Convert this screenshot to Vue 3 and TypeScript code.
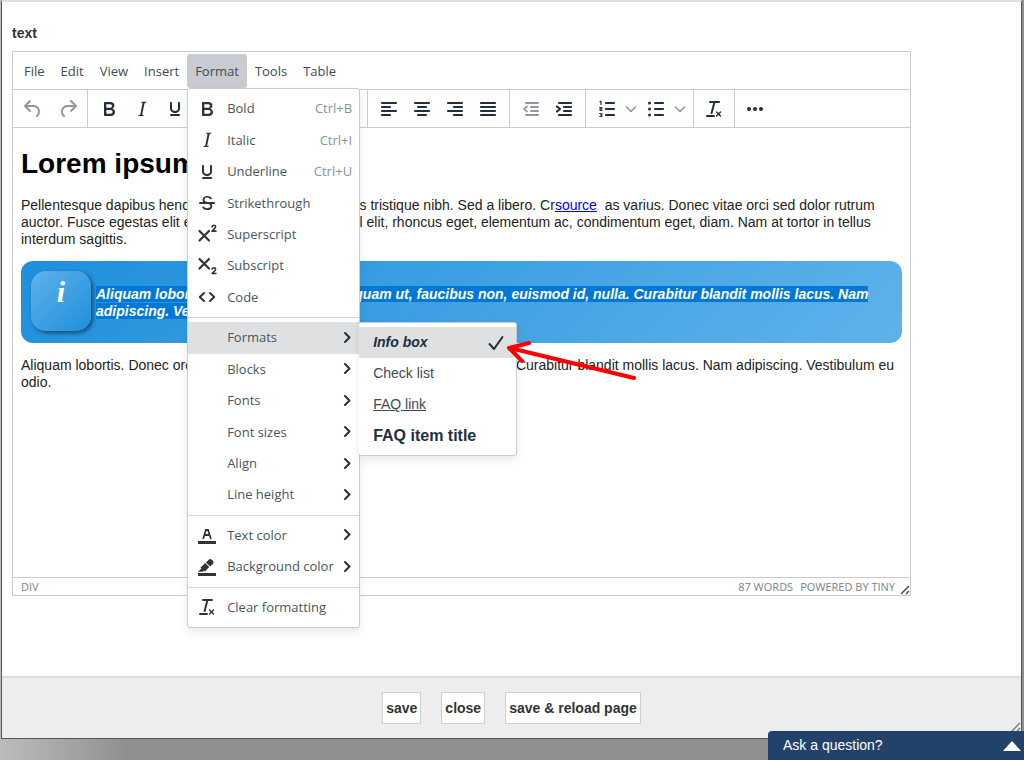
<script lang="ts">
import { h } from 'vue'
</script>

<script setup lang="ts">
interface IconShape {
  d: string
  stroke?: number
}

interface MenuEntry {
  label: string
  icon?: string
  shortcut?: string
  submenu?: boolean
}

const icons: Record<string, IconShape[]> = {
  undo: [{ d: 'M6.4 8H12c3.7 0 6.2 2 6.8 5.1.6 2.7-.4 5.6-2.3 6.8a1 1 0 0 1-1-1.8c1.1-.6 1.8-2.7 1.4-4.6-.5-2.1-2.1-3.5-4.9-3.5H6.4l3.3 3.3a1 1 0 1 1-1.4 1.4l-5-5a1 1 0 0 1 0-1.4l5-5a1 1 0 0 1 1.4 1.4L6.4 8z' }],
  redo: [{ d: 'M17.6 10H12c-2.8 0-4.4 1.4-4.9 3.5-.4 2 .3 4 1.4 4.6a1 1 0 1 1-1 1.8c-2-1.2-2.9-4.1-2.3-6.8.6-3 3-5.1 6.8-5.1h5.6l-3.3-3.3a1 1 0 1 1 1.4-1.4l5 5a1 1 0 0 1 0 1.4l-5 5a1 1 0 0 1-1.4-1.4l3.3-3.3z' }],
  bold: [{ d: 'M7.8 19c-.3 0-.5 0-.6-.2l-.2-.5V5.7c0-.2 0-.4.2-.5l.6-.2h5c1.5 0 2.7.3 3.5 1 .7.6 1.1 1.4 1.1 2.5a3 3 0 0 1-.6 1.9c-.4.6-1 1-1.6 1.2.4.1.9.3 1.3.6s.8.7 1 1.2c.4.4.5 1 .5 1.6 0 1.3-.4 2.3-1.3 3-.8.7-2.1 1-3.8 1H7.8zm5-8.3c.6 0 1.2-.1 1.6-.5.4-.3.6-.7.6-1.3 0-1.1-.8-1.7-2.3-1.7H9.3v3.5h3.4zm.5 6c.7 0 1.3-.1 1.7-.4.4-.4.6-.9.6-1.5s-.2-1-.7-1.4c-.4-.3-1-.4-2-.4H9.4v3.8h4z' }],
  italic: [{ d: 'M16.7 4.7l-.1.9h-.3c-.6 0-1 0-1.4.3-.3.3-.4.6-.5 1.1l-2.1 9.8v.6c0 .5.4.8 1.4.8h.2l-.2.8H8l.2-.8h.2c1.1 0 1.8-.5 2-1.5l2-9.8.1-.5c0-.6-.4-.8-1.4-.8h-.3l.2-.9h5.8z' }],
  underline: [{ d: 'M16 5c.6 0 1 .4 1 1v5.5a4 4 0 0 1-.4 1.8l-1 1.4a5.3 5.3 0 0 1-5.5 1 5 5 0 0 1-1.6-1c-.5-.4-.8-.9-1.1-1.4a4 4 0 0 1-.4-1.8V6c0-.6.4-1 1-1s1 .4 1 1v5.5c0 .3 0 .6.2 1l.6.7a3.3 3.3 0 0 0 2.2.8 3.4 3.4 0 0 0 2.2-.8c.3-.2.4-.5.6-.8l.2-.9V6c0-.6.4-1 1-1zM8 17h8c.6 0 1 .4 1 1s-.4 1-1 1H8a1 1 0 0 1 0-2z' }],
  strike: [
    { d: 'M15.6 8.5c-.5-.7-1-1.1-1.3-1.3-.6-.4-1.3-.6-2-.6-2.7 0-2.8 1.7-2.8 2.1 0 1.6 1.8 2 3.2 2.3 4.4.9 4.6 2.8 4.6 3.9 0 1.4-.7 4.1-5 4.1A6.2 6.2 0 0 1 7 16.4l1.5-1.1c.4.6 1.6 2 3.7 2 1.6 0 2.5-.4 3-1.2.4-.8.3-2-.8-2.6-.7-.4-1.6-.7-2.9-1-1-.2-3.9-.8-3.9-3.6C7.6 6 10.3 5 12.4 5c2.9 0 4.2 1.6 4.7 2.4l-1.5 1.1z' },
    { d: 'M5 11h14a1 1 0 0 1 0 2H5a1 1 0 0 1 0-2z' },
  ],
  superscript: [
    { d: 'M4.5 9l9.5 9.500M14 9l-9.500 9.500', stroke: 2.2 },
    { d: 'M17 4.800c.3-2 3.600-2 3.600 0 0 1.400-1.800 2.500-3.500 4.300H21', stroke: 1.6 },
  ],
  subscript: [
    { d: 'M4.500 5l9.500 9.500M14 5l-9.500 9.500', stroke: 2.2 },
    { d: 'M17 15.200c.3-2 3.600-2 3.600 0 0 1.400-1.800 2.500-3.500 4.300H21', stroke: 1.6 },
  ],
  code: [{ d: 'M9 8l-4.200 4L9 16M15 8l4.200 4L15 16', stroke: 2 }],
  alignLeft: [{ d: 'M5 6h14M5 10h8M5 14h14M5 18h8', stroke: 2.2 }],
  alignCenter: [{ d: 'M5 6h14M8 10h8M5 14h14M8 18h8', stroke: 2.2 }],
  alignRight: [{ d: 'M5 6h14M11 10h8M5 14h14M11 18h8', stroke: 2.2 }],
  justify: [{ d: 'M5 6h14M5 10h14M5 14h14M5 18h14', stroke: 2.2 }],
  outdent: [{ d: 'M7 6h12M12 10h7M12 14h7M7 18h12', stroke: 2 }, { d: 'M8 9.500L5 12l3 2.500', stroke: 1.7 }],
  indent: [{ d: 'M7 6h12M12 10h7M12 14h7M7 18h12', stroke: 2.200 }, { d: 'M5 9.500L8 12l-3 2.500', stroke: 2.200 }],
  orderedList: [
    { d: 'M11 6h8M11 12h8M11 18h8', stroke: 2.2 },
    { d: 'M5 4.700l1-.5v3.300M4.800 10.700h2v1.300h-1.700v1.500h2M4.800 16.500h2v3h-2M5.400 18h1.400', stroke: 1.2 },
  ],
  bulletList: [
    { d: 'M11 6h8M11 12h8M11 18h8', stroke: 2.2 },
    { d: 'M5.500 6h.01M5.500 12h.01M5.500 18h.01', stroke: 3 },
  ],
  clear: [{ d: 'M13.200 6a1 1 0 0 1 0 .2l-2.600 10a1 1 0 0 1-1 .8h-.2a.8.8 0 0 1-.8-1l2.600-10H8a1 1 0 1 1 0-2h9a1 1 0 0 1 0 2h-3.800zM5 18h7a1 1 0 0 1 0 2H5a1 1 0 0 1 0-2zm13 1.500L16.500 18 15 19.500a.7.7 0 0 1-1-1l1.500-1.500-1.500-1.500a.7.7 0 0 1 1-1l1.500 1.500 1.500-1.500a.7.7 0 0 1 1 1L17.500 17l1.500 1.500a.7.7 0 0 1-1 1z' }],
  more: [{ d: 'M6 12h.01M12 12h.01M18 12h.01', stroke: 4 }],
  textColor: [
    { d: 'M3 18h18v3H3z' },
    { d: 'M8.700 16h-.8a.5.5 0 0 1-.5-.6l2.700-9c.1-.3.3-.4.5-.4h2.800c.2 0 .4.1.5.4l2.700 9a.5.5 0 0 1-.5.6h-.8a.5.5 0 0 1-.4-.4l-.7-2.200c0-.3-.3-.4-.5-.4h-3.400c-.2 0-.4.1-.5.4l-.7 2.200c0 .3-.2.4-.4.4zm2.600-7.600-.6 2a.5.5 0 0 0 .5.6h1.600a.5.5 0 0 0 .5-.6l-.6-2c0-.3-.3-.4-.5-.4h-.4c-.2 0-.4.1-.5.4z' },
  ],
  backColor: [
    { d: 'M3 18h18v3H3z' },
    { d: 'M7.700 16.700H3l3.300-3.300-.7-.8L10.200 8l4 4.100-4 4.200c-.2.2-.6.2-.8 0l-.6-.7-1.100 1.100zm5-7.500L11 7.400l3-2.900a2 2 0 0 1 2.600 0L18 6c.7.7.7 2 0 2.700l-2.900 2.900-1.800-1.800-.5-.6' },
  ],
  chevronRight: [{ d: 'M10 7l4.500 4.500L10 16', stroke: 2 }],
  chevronDown: [{ d: 'M7.500 10l4.500 4.500 4.500-4.500', stroke: 1.6 }],
  check: [{ d: 'M5.500 13l4.500 5L18.500 6', stroke: 2 }],
}

const menus: string[] = ['File', 'Edit', 'View', 'Insert', 'Format', 'Tools', 'Table']

const styleButtons: [string, string][] = [
  ['bold', 'Bold'],
  ['italic', 'Italic'],
  ['underline', 'Underline'],
  ['strike', 'Strikethrough'],
]
const alignButtons: [string, string][] = [
  ['alignLeft', 'Align left'],
  ['alignCenter', 'Align center'],
  ['alignRight', 'Align right'],
  ['justify', 'Justify'],
]
const listButtons: [string, string][] = [
  ['orderedList', 'Numbered list'],
  ['bulletList', 'Bullet list'],
]

const formatMenu: MenuEntry[][] = [
  [
    { label: 'Bold', icon: 'bold', shortcut: 'Ctrl+B' },
    { label: 'Italic', icon: 'italic', shortcut: 'Ctrl+I' },
    { label: 'Underline', icon: 'underline', shortcut: 'Ctrl+U' },
    { label: 'Strikethrough', icon: 'strike' },
    { label: 'Superscript', icon: 'superscript' },
    { label: 'Subscript', icon: 'subscript' },
    { label: 'Code', icon: 'code' },
  ],
  [
    { label: 'Formats', submenu: true },
    { label: 'Blocks', submenu: true },
    { label: 'Fonts', submenu: true },
    { label: 'Font sizes', submenu: true },
    { label: 'Align', submenu: true },
    { label: 'Line height', submenu: true },
  ],
  [
    { label: 'Text color', icon: 'textColor', submenu: true },
    { label: 'Background color', icon: 'backColor', submenu: true },
  ],
  [{ label: 'Clear formatting', icon: 'clear' }],
]

const customFormats = [
  { label: 'Info box', kind: 'info', active: true },
  { label: 'Check list', kind: 'plain', active: false },
  { label: 'FAQ link', kind: 'link', active: false },
  { label: 'FAQ item title', kind: 'title', active: false },
]

const Icon = (props: { name: string }) =>
  h(
    'svg',
    { viewBox: '0 0 24 24', width: 24, height: 24, 'aria-hidden': 'true' },
    icons[props.name].map((s) =>
      s.stroke
        ? h('path', {
            d: s.d,
            fill: 'none',
            stroke: 'currentColor',
            'stroke-width': s.stroke,
            'stroke-linecap': 'round',
            'stroke-linejoin': 'round',
          })
        : h('path', { d: s.d, fill: 'currentColor', 'fill-rule': 'evenodd' }),
    ),
  )
Icon.props = ['name']
</script>

<template>
  <div class="page">
    <main class="dialog">
      <section class="body">
        <h2 class="field-label">text</h2>
        <div class="editor">
          <nav class="menubar">
            <div v-for="name in menus" :key="name" class="menu-slot">
              <button type="button" class="menu-button" :class="{ open: name === 'Format' }">{{ name }}</button>
              <div v-if="name === 'Format'" class="menu" role="menu">
                <div v-for="(group, g) in formatMenu" :key="g" class="menu-group">
                  <div v-for="entry in group" :key="entry.label" class="menu-row">
                    <button type="button" class="menu-item" :class="{ active: entry.label === 'Formats' }" role="menuitem">
                      <span class="menu-icon"><Icon v-if="entry.icon" :name="entry.icon" /></span>
                      <span class="menu-text">{{ entry.label }}</span>
                      <span v-if="entry.shortcut" class="shortcut">{{ entry.shortcut }}</span>
                      <span v-if="entry.submenu" class="caret"><Icon name="chevronRight" /></span>
                    </button>
                    <div v-if="entry.label === 'Formats'" class="submenu" role="menu">
                      <button
                        v-for="f in customFormats"
                        :key="f.label"
                        type="button"
                        class="format-item"
                        :class="[f.kind, { active: f.active }]"
                        role="menuitem"
                      >
                        <span>{{ f.label }}</span>
                        <Icon v-if="f.active" name="check" />
                      </button>
                      <svg class="pointer" viewBox="0 0 134 46" width="134" height="46" aria-hidden="true">
                        <path d="M129 37L5 7M24 2L4 7l13 13" fill="none" stroke="#f00" stroke-width="4" stroke-linecap="round" stroke-linejoin="round" />
                      </svg>
                    </div>
                  </div>
                </div>
              </div>
            </div>
          </nav>

          <div class="toolbar">
            <div class="tools history">
              <button type="button" class="tool dim" aria-label="Undo"><Icon name="undo" /></button>
              <button type="button" class="tool dim" aria-label="Redo"><Icon name="redo" /></button>
            </div>
            <div class="tools styles">
              <button v-for="[icon, label] in styleButtons" :key="icon" type="button" class="tool" :aria-label="label"><Icon :name="icon" /></button>
            </div>
            <div class="tools">
              <button v-for="[icon, label] in alignButtons" :key="icon" type="button" class="tool" :aria-label="label"><Icon :name="icon" /></button>
            </div>
            <div class="tools">
              <button type="button" class="tool dim" aria-label="Decrease indent"><Icon name="outdent" /></button>
              <button type="button" class="tool" aria-label="Increase indent"><Icon name="indent" /></button>
            </div>
            <div class="tools">
              <template v-for="[icon, label] in listButtons" :key="icon">
                <button type="button" class="tool" :aria-label="label"><Icon :name="icon" /></button>
                <button type="button" class="tool split dim" :aria-label="label + ' options'"><Icon name="chevronDown" /></button>
              </template>
            </div>
            <div class="tools single">
              <button type="button" class="tool" aria-label="Clear formatting"><Icon name="clear" /></button>
            </div>
            <div class="tools single">
              <button type="button" class="tool" aria-label="More"><Icon name="more" /></button>
            </div>
          </div>

          <article class="content">
            <h1>Lorem ipsum</h1>
            <p>
              Pellentesque dapibus hendrerit tortor. Praesent egestas tristique nibh. Sed a libero. Cr<a href="#source">source</a>&nbsp; as varius. Donec vitae orci sed dolor rutrum auctor. Fusce egestas elit eget lorem. Suspendisse nisl elit, rhoncus eget, elementum ac, condimentum eget, diam. Nam at tortor in tellus interdum sagittis.
            </p>
            <div class="info-box">
              <span class="info-badge">i</span>
              <p><span class="selected">Aliquam lobortis. Donec orci lectus, aliquam ut, faucibus non, euismod id, nulla. Curabitur blandit mollis lacus. Nam adipiscing. Vestibulum eu odio.</span></p>
            </div>
            <p>
              Aliquam lobortis. Donec orci lectus, aliquam ut, faucibus non, euismod id, nulla. Curabitur blandit mollis lacus. Nam adipiscing. Vestibulum eu odio.
            </p>
          </article>

          <div class="statusbar">
            <span>DIV</span>
            <span class="words">87 WORDS</span>
            <a href="#tiny">POWERED BY TINY</a>
            <svg class="grip" viewBox="0 0 10 10" width="10" height="10" aria-hidden="true">
              <path d="M1 9l8-8M6 9l3-3" fill="none" stroke="currentColor" stroke-width="1.3" />
            </svg>
          </div>
        </div>
      </section>

      <footer class="actions">
        <button type="button">save</button>
        <button type="button">close</button>
        <button type="button">save &amp; reload page</button>
        <svg class="corner" viewBox="0 0 10 10" width="10" height="10" aria-hidden="true">
          <path d="M1 9l8-8M6 9l3-3" fill="none" stroke="currentColor" stroke-width="1.3" />
        </svg>
      </footer>
    </main>

    <button type="button" class="chat">
      <span>Ask a question?</span>
      <svg viewBox="0 0 18 10" width="18" height="10" aria-hidden="true"><path d="M0 10L9 0l9 10z" fill="#fff" /></svg>
    </button>
  </div>
</template>

<style>
body {
  margin: 0;
}
</style>

<style scoped>
.page {
  box-sizing: border-box;
  display: flex;
  flex-direction: column;
  min-height: 100vh;
  padding: 0 2px 21px 1px;
  background: linear-gradient(90deg, #bcbcbc 0, #8f8f8f 130px, #8f8f8f 100%);
  font-family: 'Liberation Sans', Arial, sans-serif;
  font-size: 14px;
  line-height: 17px;
  color: #222;
}

button {
  margin: 0;
  padding: 0;
  border: 0;
  background: none;
  color: inherit;
  font: inherit;
}

.dialog {
  flex: 1;
  display: flex;
  flex-direction: column;
  border: 1px solid #555;
  border-top: 2px solid #dfdfdf;
  background: #fff;
}

.body {
  flex: 1;
  display: flex;
  flex-direction: column;
  padding: 22px 10px 80px;
}

.field-label {
  margin: 0 0 9px;
  font-size: 14px;
  line-height: 18px;
  color: #333;
}

.editor {
  flex: 1;
  display: flex;
  flex-direction: column;
  box-sizing: border-box;
  max-width: 899px;
  border: 1px solid #ccc;
  color: #222f3e;
}

.menubar {
  display: flex;
  padding: 2px 3px 1px;
  border-bottom: 1px solid #ccc;
  font-family: 'Open Sans', 'Noto Sans', sans-serif;
  font-size: 13px;
}

.menu-slot {
  position: relative;
}

.menu-button {
  height: 34px;
  padding: 0 8px;
  border-radius: 3px;
  color: #3f4a57;
}

.menu-button.open {
  background: #c8cbcf;
}

.menu {
  position: absolute;
  z-index: 2;
  top: 34px;
  left: 0;
  display: flex;
  flex-direction: column;
  box-sizing: border-box;
  width: 173px;
  height: 540px;
  border: 1px solid #ccc;
  border-radius: 3px;
  background: #fff;
  box-shadow: 0 4px 8px rgba(34, 47, 62, 0.1);
}

.menu-group {
  display: contents;
}

.menu-row {
  position: relative;
  flex: 1;
  display: flex;
}

.menu-group:first-child .menu-row:first-child {
  margin-top: 4px;
}

.menu-group .menu-row:last-child {
  margin-bottom: 4px;
}

.menu-group + .menu-group::before {
  content: '';
  height: 1px;
  margin-bottom: 4px;
  background: #d3d3d3;
}

.menu-item {
  flex: 1;
  display: flex;
  align-items: center;
  padding: 0 7px;
  color: #4a5460;
  text-align: left;
  white-space: nowrap;
}

.menu-item.active,
.format-item.active {
  background: #dee0e2;
}

.menu-icon {
  flex: 0 0 24px;
  height: 24px;
  margin-right: 8px;
  color: #333;
}

.menu-text {
  flex: 1;
}

.shortcut {
  color: #8a929b;
}

.caret {
  display: flex;
  justify-content: center;
  width: 10px;
  color: #222f3e;
}

.caret svg {
  flex: 0 0 24px;
}

.submenu {
  position: absolute;
  z-index: 3;
  top: 0;
  left: 100%;
  box-sizing: border-box;
  width: 158px;
  padding: 4px 0;
  border: 1px solid #ccc;
  border-left: 0;
  border-radius: 3px;
  background: #fff;
  box-shadow: 0 4px 8px rgba(34, 47, 62, 0.1);
  font-family: 'Liberation Sans', Arial, sans-serif;
  font-size: 14px;
}

.format-item {
  display: flex;
  align-items: center;
  justify-content: space-between;
  width: 100%;
  height: 32px;
  height: 31px;
  padding: 0 8px 0 14px;
  color: #3f4a57;
}

.format-item.info {
  font-weight: bold;
  font-style: italic;
  color: #222f3e;
}

.format-item.link {
  text-decoration: underline;
}

.format-item.title {
  font-size: 16px;
  font-weight: bold;
  color: #222f3e;
}

.pointer {
  position: absolute;
  top: 18px;
  left: 146px;
}

.toolbar {
  display: flex;
  height: 37px;
  border-bottom: 1px solid #ccc;
}

.tools {
  display: flex;
  padding: 0 5px 0 4px;
  border-right: 1px solid #ccc;
}

.tools.single {
  padding: 0 4px 0 3px;
}

.tools:last-child {
  border-right: 0;
}

.tools.history {
  padding: 0 2px;
}

.history .tool {
  width: 35px;
}

.styles {
  box-sizing: border-box;
  width: 280px;
}

.tool {
  display: flex;
  align-items: center;
  justify-content: center;
  width: 33px;
}

.tool.split {
  width: 16px;
}

.tool svg {
  flex: 0 0 24px;
}

.tool.dim {
  color: #9097a0;
}

.content {
  flex: 1;
  padding: 0 8px;
  color: #222;
}

.content h1 {
  margin: 20px 0 17px;
  font-size: 28px;
  line-height: 32px;
  color: #000;
}

.content p {
  margin: 0 0 13px;
}

.content a {
  color: #00e;
}

.info-box {
  display: flex;
  gap: 5px;
  margin-bottom: 14px;
  padding: 10px 10px 12px;
  border-radius: 12px;
  background: linear-gradient(135deg, #1f8fdb, #5fb2ea);
  color: #fff;
  font-weight: bold;
  font-style: italic;
}

.info-box p {
  margin: 15px 0 0;
}

.info-badge {
  flex: 0 0 60px;
  height: 60px;
  border-radius: 15px;
  background: linear-gradient(135deg, #5fb2ea, #1f8fdb);
  box-shadow: 2px 2px 4px rgba(0, 0, 0, 0.5);
  font-family: 'Liberation Serif', serif;
  font-size: 30px;
  line-height: 42px;
  text-align: center;
}

.selected {
  background: #0078d7;
}

.statusbar {
  display: flex;
  align-items: center;
  height: 17px;
  padding-left: 8px;
  border-top: 1px solid #ccc;
  font-family: 'Open Sans', 'Noto Sans', sans-serif;
  font-size: 11px;
  color: #7a828b;
}

.statusbar a {
  margin: 0 5px 0 7px;
  color: inherit;
  text-decoration: none;
}

.words {
  margin-left: auto;
}

.grip {
  align-self: flex-end;
  color: #444;
}

.actions {
  position: relative;
  display: flex;
  justify-content: center;
  gap: 20px;
  padding: 14px 0;
  border-top: 2px solid #ddd;
  background: #ededed;
}

.actions button {
  height: 32px;
  padding: 0 3px;
  border: 1px solid #d0d0d0;
  background: #fff;
  color: #333;
  font-weight: bold;
}

.corner {
  position: absolute;
  right: 0;
  bottom: 6px;
  color: #777;
}

.chat {
  position: fixed;
  z-index: 4;
  right: 0;
  bottom: 0;
  display: flex;
  align-items: center;
  justify-content: space-between;
  width: 256px;
  height: 29px;
  padding: 0 3px 0 15px;
  border-radius: 4px 0 0 0;
  background: #234269;
  color: #fff;
}
</style>
